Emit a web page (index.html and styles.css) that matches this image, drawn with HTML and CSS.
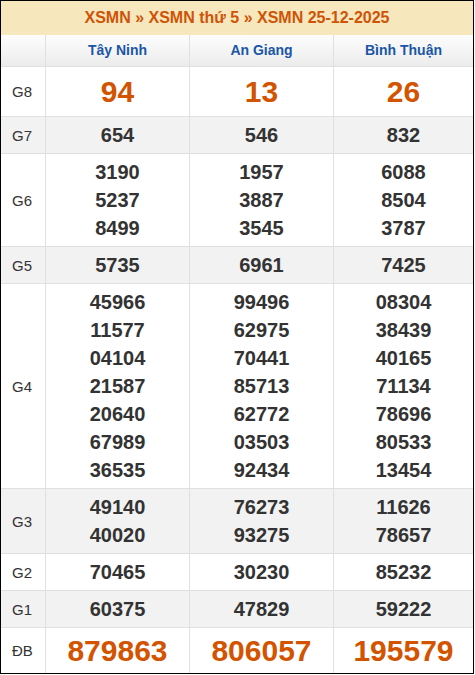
FILE: index.html
```html
<!DOCTYPE html>
<html lang="vi">
<head>
<meta charset="utf-8">
<title>XSMN 25-12-2025</title>
<link rel="stylesheet" href="styles.css">
</head>
<body>
<div class="board">
  <div class="title">XSMN » XSMN thứ 5 » XSMN 25-12-2025</div>
  <div class="grid">
    <div class="head"></div>
    <div class="head prov">Tây Ninh</div>
    <div class="head prov">An Giang</div>
    <div class="head prov">Bình Thuận</div>

    <div class="lbl g8">G8</div>
    <div class="cell g8"><span class="big n8">94</span></div>
    <div class="cell g8"><span class="big n8">13</span></div>
    <div class="cell g8"><span class="big n8">26</span></div>

    <div class="lbl alt">G7</div>
    <div class="cell alt"><span class="num">654</span></div>
    <div class="cell alt"><span class="num">546</span></div>
    <div class="cell alt"><span class="num">832</span></div>

    <div class="lbl">G6</div>
    <div class="cell"><span class="num">3190</span><span class="num">5237</span><span class="num">8499</span></div>
    <div class="cell"><span class="num">1957</span><span class="num">3887</span><span class="num">3545</span></div>
    <div class="cell"><span class="num">6088</span><span class="num">8504</span><span class="num">3787</span></div>

    <div class="lbl alt">G5</div>
    <div class="cell alt"><span class="num">5735</span></div>
    <div class="cell alt"><span class="num">6961</span></div>
    <div class="cell alt"><span class="num">7425</span></div>

    <div class="lbl">G4</div>
    <div class="cell"><span class="num">45966</span><span class="num">11577</span><span class="num">04104</span><span class="num">21587</span><span class="num">20640</span><span class="num">67989</span><span class="num">36535</span></div>
    <div class="cell"><span class="num">99496</span><span class="num">62975</span><span class="num">70441</span><span class="num">85713</span><span class="num">62772</span><span class="num">03503</span><span class="num">92434</span></div>
    <div class="cell"><span class="num">08304</span><span class="num">38439</span><span class="num">40165</span><span class="num">71134</span><span class="num">78696</span><span class="num">80533</span><span class="num">13454</span></div>

    <div class="lbl alt">G3</div>
    <div class="cell alt"><span class="num">49140</span><span class="num">40020</span></div>
    <div class="cell alt"><span class="num">76273</span><span class="num">93275</span></div>
    <div class="cell alt"><span class="num">11626</span><span class="num">78657</span></div>

    <div class="lbl">G2</div>
    <div class="cell"><span class="num">70465</span></div>
    <div class="cell"><span class="num">30230</span></div>
    <div class="cell"><span class="num">85232</span></div>

    <div class="lbl alt">G1</div>
    <div class="cell alt"><span class="num">60375</span></div>
    <div class="cell alt"><span class="num">47829</span></div>
    <div class="cell alt"><span class="num">59222</span></div>

    <div class="lbl">ĐB</div>
    <div class="cell"><span class="big db">879863</span></div>
    <div class="cell"><span class="big db">806057</span></div>
    <div class="cell"><span class="big db">195579</span></div>
  </div>
</div>
</body>
</html>
```

FILE: styles.css
```css
html, body {
  margin: 0;
  padding: 0;
  background: #fff;
}
body {
  font-family: "Liberation Sans", Arial, sans-serif;
  color: #333;
}
.board {
  width: 474px;
  box-sizing: border-box;
  border: 1px solid #000;
}
.title {
  height: 34px;
  line-height: 34px;
  background: #f6e7bd;
  color: #cf5407;
  font-weight: bold;
  font-size: 16px;
  text-align: center;
}
.grid {
  display: grid;
  grid-template-columns: 44px 143px 143px 139px;
  gap: 1px;
  background: #e0e0e0;
}
.head {
  height: 31px;
  background: linear-gradient(#fdfdfd, #ececec);
}
.prov {
  line-height: 31px;
  text-align: center;
  color: #1a56a6;
  font-weight: bold;
  font-size: 14px;
}
.lbl, .cell {
  background: #fff;
}
.alt {
  background: #f2f2f2;
}
.lbl {
  display: flex;
  align-items: center;
  padding-left: 11px;
  font-size: 15px;
  color: #333;
}
.cell {
  display: flex;
  flex-direction: column;
  align-items: center;
  padding: 4px 0;
}
.num {
  display: block;
  line-height: 28px;
  font-size: 20px;
  font-weight: bold;
  color: #333;
}
.big {
  display: block;
  font-size: 30px;
  font-weight: bold;
  color: #d35400;
}
.n8 {
  line-height: 41px;
}
.db {
  line-height: 37px;
}
```
